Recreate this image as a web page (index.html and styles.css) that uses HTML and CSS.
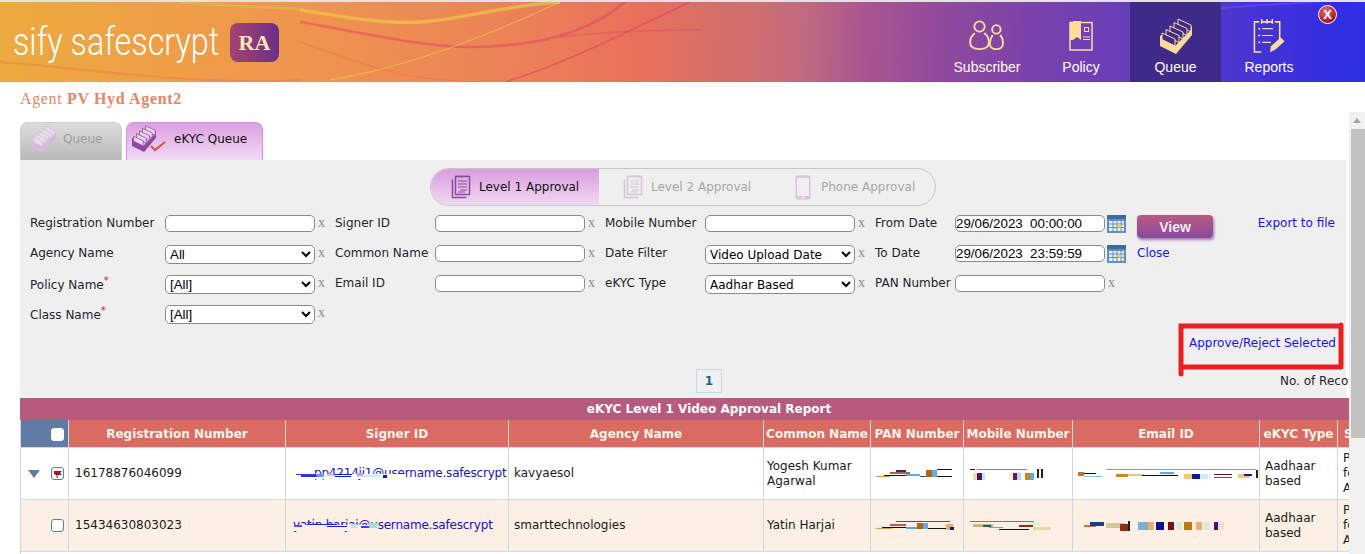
FILE: index.html
```html
<!DOCTYPE html>
<html lang="en">
<head>
    <meta charset="UTF-8">
    <title>Sify Safescrypt RA</title>
    <link rel="stylesheet" href="styles.css">
</head>
<body>
    <!-- shared icons -->
    <svg class="icon-defs" width="0" height="0">
        <symbol id="box" viewBox="0 0 32 36">
            <g fill="var(--card, #3d2a85)" stroke="currentColor" stroke-width="1">
                <path d="M18 1L31 7L31 14L18 7Z"/>
                <path d="M14 4.500L27 10.500L27 17.500L14 11Z"/>
                <path d="M10 8L23 14L23 21L10 14.500Z"/>
                <path d="M6 11.500L19 17.500L19 24.500L6 18Z"/>
                <path d="M2 15L15 21L15 28L2 21.500Z"/>
            </g>
            <path d="M31 7L32 10V17L16 36L0 28V18L2 17L2 21.500L15 28L16 27L31 12Z" fill="currentColor"/>
        </symbol>
        <symbol id="doc" viewBox="0 0 20 24">
            <path d="M4.500 1.500H18.500V19.500H4.500Z M1.500 4.500V22.500H15.500" fill="none" stroke="currentColor" stroke-width="1.500"/>
            <path d="M7 1V0 M10 1V0 M13 1V0 M16 1V0 M7 6H16 M7 9H16 M7 12H16 M9 15H16 M7 17H14" stroke="currentColor" stroke-width="1"/>
        </symbol>
    </svg>

    <header class="banner">
        <svg class="banner-waves" viewBox="0 0 1365 80" preserveAspectRatio="none" fill="none">
            <path d="M0 60 C80 66 200 84 300 78" stroke="#ef7350" stroke-width="2" opacity=".45"/>
            <path d="M180 0 C240 6 280 4 300 8" stroke="#ecd245" stroke-width="3" opacity=".3"/>
            <path d="M300 8 C340 14 380 22 420 20 C460 18 500 4 560 0" stroke="#ecd245" stroke-width="3.500" opacity=".6"/>
            <path d="M300 20 C360 30 420 45 470 45 C540 45 590 30 625 0" stroke="#e8336a" stroke-width="2.500" opacity=".45"/>
            <path d="M300 40 C330 50 360 62 385 68 C420 78 460 80 500 80" stroke="#ef6a50" stroke-width="1" opacity=".5"/>
            <path d="M330 78 C400 66 470 42 560 0" stroke="#ecd245" stroke-width="1" opacity=".65"/>
            <path d="M505 80 C570 60 630 28 690 0" stroke="#e8336a" stroke-width="1.500" opacity=".55"/>
            <path d="M560 35 C600 30 650 28 700 28" stroke="#d83a78" stroke-width="1.500" opacity=".35"/>
            <path d="M1130 20 C1220 0 1290 5 1365 -5" stroke="#6c5be8" stroke-width="2" opacity=".5"/>
        </svg>
        <div class="logo">
            <span class="logo-text"><span class="logo-word">sify safescrypt</span></span>
            <span class="logo-badge">RA</span>
        </div>
        <nav class="main-nav">
            <a class="nav-item nav-subscriber" href="#">
                <svg width="38" height="30" viewBox="0 0 38 32" fill="none" stroke="#fddb9b" stroke-width="2">
                    <circle cx="11" cy="7" r="5.500"/>
                    <path d="M6 14 C2 17 1 21 1 24 C1 29 5 31 11 31 C17 31 21 29 21 24 C21 20 19 16 16 14"/>
                    <circle cx="29" cy="10" r="4.500"/>
                    <path d="M25 16 C23 19 22 22 22 25 C22 29 25 31 29 31 C33 31 36 29 36 25 C36 21 35 18 33 16"/>
                </svg>
                <span>Subscriber</span>
            </a>
            <a class="nav-item nav-policy" href="#">
                <svg width="24" height="30" viewBox="0 0 24 30" fill="none" stroke="#fddb9b" stroke-width="1.500">
                    <rect x="1" y="1.500" width="22" height="27.500"/>
                    <path d="M1 1H4V0H12V19L8 16L4 19H1Z" fill="#fddb9b" stroke="none"/>
                    <rect x="15.500" y="6.500" width="4" height="4" stroke-width="1"/>
                    <path d="M14 16H21 M14 18.500H21" stroke-width="1"/>
                </svg>
                <span>Policy</span>
            </a>
            <a class="nav-item nav-queue" href="#">
                <svg class="queue-icon" width="32" height="36"><use href="#box"/></svg>
                <span>Queue</span>
            </a>
            <a class="nav-item nav-reports" href="#">
                <svg width="32" height="35" viewBox="0 0 32 36" fill="none" stroke="#fddb9b" stroke-width="1.600">
                    <path d="M6 4H1V35H8 M22 4H27V22 M9 4H19 M8.500 1V6 M14 1V6 M19.500 1V6"/>
                    <path d="M9 11H20 M9 18H20 M9 25H18" stroke-width="1.200"/>
                    <circle cx="6" cy="11" r="1" fill="#fddb9b" stroke="none"/>
                    <circle cx="6" cy="18" r="1" fill="#fddb9b" stroke="none"/>
                    <circle cx="6" cy="25" r="1" fill="#fddb9b" stroke="none"/>
                    <path d="M17 35L18 29L28 20L32 24L22 33Z" fill="#fddb9b" stroke="none"/>
                </svg>
                <span>Reports</span>
            </a>
        </nav>
        <a class="close-btn" href="#">X</a>
    </header>

    <div class="agent-line">Agent <b>PV Hyd Agent2</b></div>

    <div class="workspace">
        <main class="scroll-area">
            <div class="tabs">
                <a class="tab tab-off" href="#">
                    <svg class="tab-icon-off" width="25" height="28"><use href="#box"/></svg>
                    Queue
                </a>
                <a class="tab tab-on" href="#">
                    <svg class="tab-icon-on" width="24" height="27"><use href="#box"/></svg>
                    <svg class="tab-check" width="16" height="12" viewBox="0 0 16 12" fill="none" stroke="#d9534a" stroke-width="2.200"><path d="M1 6L5 10L15 2"/></svg>
                    eKYC Queue
                </a>
            </div>

            <section class="panel">
                <div class="approval-switch">
                    <a class="switch-item switch-on" href="#">
                        <svg class="doc-on" width="20" height="24"><use href="#doc"/></svg>
                        Level 1 Approval
                    </a>
                    <a class="switch-item switch-two" href="#">
                        <svg class="doc-off" width="20" height="24"><use href="#doc"/></svg>
                        Level 2 Approval
                    </a>
                    <a class="switch-item switch-three" href="#">
                        <svg width="16" height="25" viewBox="0 0 16 25"><rect x=".5" y=".5" width="15" height="24" rx="2" fill="#dcc4de"/><rect x="2" y="3" width="12" height="18" fill="#efefef"/><rect x="6" y="22" width="4" height="1" fill="#efefef"/></svg>
                        Phone Approval
                    </a>
                </div>

                <form class="filters">
                    <label>Registration Number</label>
                    <input class="field" type="text">
                    <span class="clear">x</span>
                    <label>Signer ID</label>
                    <input class="field" type="text">
                    <span class="clear">x</span>
                    <label>Mobile Number</label>
                    <input class="field" type="text">
                    <span class="clear">x</span>
                    <label>From Date</label>
                    <input class="field date" type="text" value="29/06/2023  00:00:00">
                    <svg class="cal" width="19" height="18" viewBox="0 0 19 18"><rect width="19" height="18" fill="#5f8fc4"/><rect y="0" width="19" height="4" fill="#3f6a9e"/><path d="M2 6H17V16H2Z" fill="#e8eef6"/><path d="M2 9H17 M2 12.500H17 M6 6V16 M10 6V16 M14 6V16" stroke="#5f8fc4"/><rect x="10.500" y="9.500" width="3.500" height="3" fill="#f4e11a"/></svg>
                    <button class="view-btn" type="button">View</button>
                    <a class="link export" href="#">Export to file</a>

                    <label>Agency Name</label>
                    <select class="field pick"><option>All</option></select>
                    <span class="clear">x</span>
                    <label>Common Name</label>
                    <input class="field" type="text">
                    <span class="clear">x</span>
                    <label>Date Filter</label>
                    <select class="field pick tahoma"><option>Video Upload Date</option></select>
                    <span class="clear">x</span>
                    <label>To Date</label>
                    <input class="field date" type="text" value="29/06/2023  23:59:59">
                    <svg class="cal" width="19" height="18" viewBox="0 0 19 18"><rect width="19" height="18" fill="#5f8fc4"/><rect y="0" width="19" height="4" fill="#3f6a9e"/><path d="M2 6H17V16H2Z" fill="#e8eef6"/><path d="M2 9H17 M2 12.500H17 M6 6V16 M10 6V16 M14 6V16" stroke="#5f8fc4"/><rect x="10.500" y="9.500" width="3.500" height="3" fill="#f4e11a"/></svg>
                    <a class="link close-link" href="#">Close</a>
                    <span></span>

                    <label class="low">Policy Name<sup>*</sup></label>
                    <select class="field pick"><option>[All]</option></select>
                    <span class="clear">x</span>
                    <label>Email ID</label>
                    <input class="field" type="text">
                    <span class="clear">x</span>
                    <label>eKYC Type</label>
                    <select class="field pick tahoma"><option>Aadhar Based</option></select>
                    <span class="clear">x</span>
                    <label>PAN Number</label>
                    <input class="field" type="text">
                    <span class="clear">x</span>
                    <span></span>
                    <span></span>

                    <label class="low">Class Name<sup>*</sup></label>
                    <select class="field pick"><option>[All]</option></select>
                    <span class="clear">x</span>
                </form>

                <div class="approve-row">
                    <a class="link approve" href="#">
                        Approve/Reject Selected
                        <svg class="marker" width="170" height="55" viewBox="0 0 170 55" fill="none" stroke="#e91f22" stroke-width="5" stroke-linecap="round">
                            <path d="M6 52V4H163 M166 3V45 M6 45H166"/>
                        </svg>
                    </a>
                </div>

                <div class="pager-row">
                    <a class="pager" href="#">1</a>
                    <span class="rec-count">No. of Records : 2</span>
                </div>
            </section>

            <table class="report">
                <colgroup>
                    <col class="c-check"><col class="c-reg"><col class="c-signer"><col class="c-agency"><col class="c-name">
                    <col class="c-pan"><col class="c-mobile"><col class="c-email"><col class="c-type"><col class="c-status">
                </colgroup>
                <thead>
                    <tr class="report-title"><th colspan="10"><span>eKYC Level 1 Video Approval Report</span></th></tr>
                    <tr class="report-head">
                        <th class="head-check"><input class="check head-box" type="checkbox"></th>
                        <th>Registration Number</th>
                        <th>Signer ID</th>
                        <th>Agency Name</th>
                        <th>Common Name</th>
                        <th>PAN Number</th>
                        <th>Mobile Number</th>
                        <th>Email ID</th>
                        <th>eKYC Type</th>
                        <th class="left">Status</th>
                    </tr>
                </thead>
                <tbody>
                    <tr>
                        <td class="cell-check">
                            <span class="caret"></span>
                            <span class="flag-box"><svg width="8" height="8" viewBox="0 0 8 8"><path d="M0 1H8L6 3L8 5H3L4 8H3L2 5L0 4Z" fill="#a3121f"/></svg></span>
                        </td>
                        <td class="num">16178876046099</td>
                        <td class="signer">
                            <span class="smear first">pp4214ji1@username.safescrypt
                                <svg width="115" height="10" viewBox="0 0 115 10"><rect x="19" y="5" width="92" height="5" fill="#fff"/><rect x="1" y="5" width="20" height="1" fill="#3030ff"/><rect x="6" y="6" width="20" height="2" fill="#2d2de8"/><rect x="22" y="5" width="7" height="3" fill="#58a0ff"/><rect x="32" y="5" width="8" height="2" fill="#d7b5ff"/><rect x="39" y="5" width="18" height="1" fill="#1818d8"/><rect x="40" y="7" width="16" height="1" fill="#1818d8"/><rect x="62" y="6" width="24" height="2" fill="#c9f2f5"/><rect x="62" y="4" width="6" height="3" fill="#c9a0ff"/><rect x="88" y="6" width="4" height="3" fill="#3000e0"/></svg>
                            </span>
                        </td>
                        <td>kavyaesol</td>
                        <td class="name">Yogesh Kumar Agarwal</td>
                        <td class="masked">
                            <svg width="76" height="9" viewBox="0 0 76 9"><rect x="0" y="7" width="14" height="1" fill="#d99a3a"/><rect x="8" y="6" width="22" height="1" fill="#111"/><rect x="14" y="3" width="20" height="2" fill="#c0574b"/><rect x="20" y="1" width="10" height="2" fill="#25308a"/><rect x="30" y="5" width="14" height="2" fill="#5aa9e6"/><rect x="44" y="7" width="6" height="1" fill="#0a5fa0"/><rect x="50" y="1" width="6" height="7" fill="#b5650d"/><rect x="56" y="1" width="5" height="7" fill="#6aa8dc"/><rect x="61" y="0" width="15" height="1" fill="#111"/><rect x="61" y="7" width="15" height="1" fill="#111"/></svg>
                        </td>
                        <td class="masked">
                            <svg width="76" height="12" viewBox="0 0 76 12"><rect x="1" y="1" width="5" height="1" fill="#111"/><rect x="8" y="1" width="50" height="1" fill="#888"/><rect x="4" y="5" width="8" height="7" fill="#f7d9a8"/><rect x="8" y="5" width="5" height="7" fill="#55105f"/><rect x="13" y="5" width="3" height="7" fill="#c8e6fa"/><rect x="40" y="5" width="8" height="7" fill="#fdf3c4"/><rect x="44" y="5" width="4" height="7" fill="#7c0e5a"/><rect x="48" y="5" width="4" height="7" fill="#b5dcf5"/><rect x="56" y="5" width="5" height="7" fill="#c88a1f"/><rect x="61" y="5" width="4" height="7" fill="#5aa9e6"/><rect x="68" y="1" width="2" height="9" fill="#222"/><rect x="72" y="1" width="2" height="9" fill="#222"/></svg>
                        </td>
                        <td class="masked">
                            <svg width="182" height="12" viewBox="0 0 182 12"><rect x="0" y="4" width="6" height="4" fill="#c8732a"/><rect x="6" y="5" width="12" height="1" fill="#111"/><rect x="6" y="8" width="18" height="1" fill="#8cc4ef"/><rect x="28" y="1" width="150" height="1" fill="#999"/><rect x="38" y="6" width="12" height="3" fill="#c88a1f"/><rect x="50" y="6" width="16" height="2" fill="#f2c27a"/><rect x="64" y="7" width="36" height="1" fill="#111"/><rect x="82" y="4" width="14" height="2" fill="#5aa9e6"/><rect x="106" y="6" width="8" height="5" fill="#f0c68a"/><rect x="114" y="6" width="8" height="5" fill="#18188c"/><rect x="122" y="6" width="8" height="5" fill="#c5f3f5"/><rect x="136" y="6" width="18" height="1" fill="#7a0e2a"/><rect x="136" y="9" width="18" height="1" fill="#1f6fb0"/><rect x="160" y="6" width="12" height="4" fill="#f2c27a"/><rect x="166" y="6" width="8" height="2" fill="#18188c"/><rect x="178" y="2" width="2" height="8" fill="#222"/></svg>
                        </td>
                        <td>Aadhaar based</td>
                        <td>Pending<br>for<br>Approval</td>
                    </tr>
                    <tr class="alt">
                        <td class="cell-check"><input class="check" type="checkbox"></td>
                        <td class="num">15434630803023</td>
                        <td class="signer">
                            <span class="smear shift">yatin.harjai@username.safescrypt
                                <svg width="90" height="10" viewBox="0 0 90 10"><rect x="0" y="4" width="84" height="6" fill="#fcf0e5"/><rect x="1" y="4" width="8" height="2" fill="#7a3cff"/><rect x="14" y="3" width="30" height="1" fill="#2020d0"/><rect x="34" y="5" width="20" height="1" fill="#2020d0"/><rect x="58" y="3" width="6" height="4" fill="#b8e8e0"/><rect x="68" y="5" width="8" height="2" fill="#3b3bff"/><rect x="76" y="2" width="8" height="5" fill="#a8dcdc"/></svg>
                            </span>
                        </td>
                        <td>smarttechnologies</td>
                        <td class="name">Yatin Harjai</td>
                        <td class="masked">
                            <svg width="80" height="11" viewBox="0 0 80 11"><rect x="2" y="0" width="16" height="1" fill="#fff"/><rect x="20" y="1" width="54" height="1" fill="#555"/><rect x="0" y="8" width="16" height="1" fill="#d99a3a"/><rect x="6" y="7" width="24" height="1" fill="#111"/><rect x="14" y="4" width="16" height="2" fill="#c0574b"/><rect x="30" y="7" width="16" height="2" fill="#5aa9e6"/><rect x="41" y="3" width="6" height="6" fill="#b5650d"/><rect x="47" y="3" width="5" height="6" fill="#6aa8dc"/><rect x="52" y="8" width="20" height="1" fill="#111"/><rect x="70" y="4" width="7" height="6" fill="#e8b070"/><rect x="74" y="7" width="4" height="3" fill="#18188c"/></svg>
                        </td>
                        <td class="masked">
                            <svg width="84" height="11" viewBox="0 0 84 11"><rect x="1" y="1" width="64" height="1" fill="#777"/><rect x="4" y="4" width="20" height="3" fill="#c9b48a"/><rect x="14" y="5" width="8" height="2" fill="#18588c"/><rect x="20" y="7" width="14" height="1" fill="#5aa9e6"/><rect x="30" y="9" width="30" height="1" fill="#111"/><rect x="50" y="5" width="14" height="2" fill="#8a3010"/><rect x="56" y="3" width="16" height="2" fill="#e5ecd8"/><rect x="64" y="7" width="18" height="3" fill="#f4d29c"/></svg>
                        </td>
                        <td class="masked">
                            <svg width="150" height="14" viewBox="0 0 150 14"><rect x="6" y="6" width="12" height="2" fill="#c8732a"/><rect x="12" y="3" width="14" height="4" fill="#18408c"/><rect x="28" y="4" width="20" height="5" fill="#d9c49a"/><rect x="42" y="5" width="8" height="7" fill="#8a3010"/><rect x="50" y="2" width="2" height="10" fill="#222"/><rect x="60" y="3" width="10" height="8" fill="#7faed2"/><rect x="70" y="3" width="6" height="8" fill="#e8b070"/><rect x="78" y="3" width="8" height="8" fill="#101090"/><rect x="90" y="3" width="6" height="8" fill="#7a1010"/><rect x="98" y="3" width="6" height="8" fill="#e0e8d8"/><rect x="106" y="3" width="8" height="8" fill="#c07a10"/><rect x="118" y="3" width="6" height="8" fill="#e8b070"/><rect x="126" y="3" width="6" height="8" fill="#dde8d8"/><rect x="136" y="3" width="4" height="8" fill="#4a1080"/><rect x="140" y="3" width="6" height="8" fill="#e8e8c8"/></svg>
                        </td>
                        <td>Aadhaar based</td>
                        <td>Pending<br>for<br>Approval</td>
                    </tr>
                    <tr><td colspan="10"></td></tr>
                </tbody>
            </table>
        </main>

        <aside class="scrollbar">
            <span class="scroll-up"></span>
            <span class="scroll-thumb"></span>
        </aside>
    </div>
</body>
</html>
```

FILE: styles.css
```css
html, body {
    margin: 0;
    padding: 0;
    height: 554px;
    overflow: hidden;
    background-color: #fff;
    font-family: "DejaVu Sans", sans-serif;
    font-size: 12px;
    color: #222;
}

a {
    text-decoration: none;
}

.icon-defs {
    display: block;
    height: 0;
}

/* banner */
.banner {
    position: relative;
    display: flex;
    align-items: stretch;
    height: 80px;
    border-top: 2px solid #e4e2e4;
    background: linear-gradient(92deg, #ecab3e 0%, #ef9c48 15%, #ef9350 24%, #ec8157 38%, #e8705c 47%, #cf6e6e 55%, #c06a80 59%, #ac5590 63%, #8f4a9c 69%, #7d42aa 75%, #5f3cc0 85%, #3a30dc 95%, #2d2ee4 100%);
}

.banner-waves {
    position: absolute;
    left: 0;
    top: 0;
    width: 100%;
    height: 100%;
}

.logo {
    position: relative;
    display: flex;
    align-items: center;
    padding-left: 13px;
}

.logo-text {
    width: 208px;
    font-family: "Roboto", sans-serif;
    font-weight: 300;
    font-size: 38px;
    line-height: 44px;
    color: #fff;
    white-space: nowrap;
}

/* the logo lettering is narrower than any installed light face */
.logo-word {
    display: inline-block;
    transform: scaleX(.85);
    transform-origin: left center;
}

.logo-badge {
    display: block;
    width: 49px;
    height: 39px;
    margin: 0 0 0 9px;
    border-radius: 8px;
    background: linear-gradient(90deg, #a5436f, #6a2f8b);
    color: #fbe6b6;
    font-family: "Liberation Serif", serif;
    font-weight: bold;
    font-size: 22px;
    line-height: 39px;
    text-align: center;
}

.main-nav {
    position: relative;
    display: flex;
    margin-left: auto;
    padding-right: 48px;
}

.nav-item {
    display: flex;
    flex-direction: column;
    align-items: center;
    justify-content: flex-end;
    padding-bottom: 7px;
    font-family: "Liberation Sans", sans-serif;
    font-size: 14px;
    color: #fff;
    box-sizing: border-box;
}

.nav-subscriber {
    width: 90px;
}

.nav-subscriber svg {
    margin-bottom: 9px;
}

.nav-policy {
    width: 98px;
}

.nav-policy svg {
    margin-bottom: 8px;
}

.nav-queue {
    width: 91px;
    background-color: #3f2a8a;
}

.queue-icon {
    margin-bottom: 5px;
    color: #fddb9b;
    --card: #3f2a8a;
}

.nav-reports {
    width: 96px;
}

.nav-reports svg {
    margin-bottom: 6px;
}

.close-btn {
    position: absolute;
    right: 28px;
    top: 3px;
    width: 17px;
    height: 17px;
    border: 1px solid #fff;
    border-radius: 50%;
    background: radial-gradient(circle at 40% 30%, #e8707a, #a8161f 70%);
    color: #fff;
    font: bold 13px/17px "Liberation Sans", sans-serif;
    text-align: center;
}

.agent-line {
    height: 30px;
    padding-left: 20px;
    font-family: "Liberation Serif", serif;
    font-size: 16px;
    line-height: 33px;
    letter-spacing: .65px;
    color: #ee8266;
}

/* scrolling part */
.workspace {
    display: flex;
    height: 442px;
}

.scroll-area {
    flex: none;
    width: 1329px;
    padding: 10px 0 0 20px;
    overflow: hidden;
}

.scrollbar {
    flex: none;
    width: 16px;
    background-color: #f1f1f1;
}

.scroll-up {
    display: block;
    width: 0;
    margin: 6px auto 0;
    border: 4px solid transparent;
    border-top: 0;
    border-bottom: 5px solid #a3a3a3;
    border-left-width: 4px;
}

.scroll-thumb {
    display: block;
    width: 14px;
    height: 309px;
    margin: 6px 0 0 2px;
    background-color: #c1c1c1;
}

/* tabs */
.tabs {
    display: flex;
    gap: 4px;
    height: 38px;
}

.tab {
    display: flex;
    align-items: center;
    position: relative;
    box-sizing: border-box;
    border: 1px solid;
    border-bottom: 0;
    border-radius: 8px 8px 0 0;
    font-size: 12px;
    padding-bottom: 6px;
}

.tab svg {
    flex: none;
}

.tab-off {
    width: 102px;
    padding-left: 10px;
    gap: 7px;
    border-color: #cdcdcd;
    background: linear-gradient(#dcdcdc, #b9b9b9);
    color: #9c9c9c;
}

.tab-icon-off {
    color: #d4bcd8;
    --card: #e8dcea;
}

.tab-on {
    width: 137px;
    padding-left: 5px;
    gap: 18px;
    border: 1px solid #d390e2;
    border-bottom: 0;
    background: linear-gradient(#dc9fe0, #f1dcf4);
    color: #111;
}

.tab-icon-on {
    color: #8f4aa0;
    --card: #e8d4ee;
}

.tab-check {
    position: absolute;
    left: 23px;
    top: 17px;
}

/* filter panel */
.panel {
    width: 1326px;
    height: 238px;
    padding-top: 8px;
    box-sizing: border-box;
    background-color: #efefef;
}

.approval-switch {
    display: flex;
    width: 506px;
    height: 38px;
    margin-left: 410px;
    box-sizing: border-box;
    border: 1px solid #c6c6c6;
    border-radius: 19px;
    overflow: hidden;
}

.switch-item {
    display: flex;
    align-items: center;
    color: #a6a6a6;
}

.switch-on {
    width: 168px;
    padding-left: 20px;
    gap: 8px;
    box-sizing: border-box;
    background: linear-gradient(#da9cde, #f0d9f3);
    color: #111;
}

.switch-two {
    width: 172px;
    padding-left: 24px;
    gap: 8px;
    box-sizing: border-box;
}

.switch-three {
    padding-left: 24px;
    gap: 10px;
}

.doc-on {
    color: #8a4a9c;
}

.doc-off {
    color: #d7c3da;
}

.filters {
    display: grid;
    grid-template-columns: 135px 150px 20px 100px 150px 20px 100px 150px 20px 80px 150px 32px 76px 123px;
    grid-auto-rows: 30px;
    align-items: start;
    margin: 9px 0 0 10px;
    width: 1306px;
}

.filters label {
    margin-top: 1px;
    line-height: 15px;
    color: #1f2430;
}

.filters label.low {
    margin-top: 3px;
}

.filters sup {
    color: #e8112d;
    font-size: 10px;
    line-height: 0;
}

.field {
    width: 150px;
    height: 17px;
    padding: 0 2px;
    box-sizing: border-box;
    border: 1px solid #8a8a8a;
    border-radius: 5px;
    background-color: #fff;
    font-family: "Liberation Sans", sans-serif;
    font-size: 13.333px;
    color: #000;
    outline: none;
}

.date {
    padding: 0;
    white-space: pre;
}

.pick {
    height: 19px;
    padding: 0;
    margin-top: 0;
}

.tahoma {
    font-family: "DejaVu Sans", sans-serif;
    font-size: 12px;
}

.clear {
    padding-left: 3px;
    font-family: "Liberation Serif", serif;
    font-size: 14px;
    line-height: 15px;
    color: #8c8c8c;
}

.cal {
    margin-left: 2px;
}

.view-btn {
    width: 76px;
    height: 23px;
    padding: 0;
    border: none;
    border-radius: 4px;
    background: linear-gradient(#b75a80, #8a4a9e);
    box-shadow: 1px 2px 3px rgba(120, 70, 150, .7);
    font-family: "Liberation Sans", sans-serif;
    font-size: 14px;
    font-weight: bold;
    color: #f5e9ee;
}

.link {
    color: #1414f0;
}

.export {
    justify-self: end;
    margin: 1px 1px 0 0;
    line-height: 15px;
}

.close-link {
    margin-top: 1px;
    line-height: 15px;
}

.approve-row {
    display: flex;
    justify-content: flex-end;
    height: 15px;
    margin: 0 10px 0 0;
    position: relative;
    top: 1px;
}

.approve {
    position: relative;
    line-height: 15px;
}

.marker {
    position: absolute;
    right: -9px;
    top: -14px;
}

.pager-row {
    display: flex;
    align-items: center;
    height: 24px;
    margin-top: 19px;
    padding-left: 676px;
}

.pager {
    width: 24px;
    height: 22px;
    border: 1px solid #cdd6e3;
    background-color: #eff0f2;
    font: bold 12px/22px "DejaVu Sans", sans-serif;
    text-align: center;
    color: #2f5a8f;
}

.rec-count {
    width: 69px;
    margin-left: auto;
    margin-right: -3px;
    overflow: hidden;
    white-space: nowrap;
    color: #1f2430;
}

/* report table */
.report {
    table-layout: fixed;
    width: 1418px;
    margin-top: 0;
    border-collapse: collapse;
    font-size: 12px;
}

.c-check { width: 48px; }
.c-reg { width: 217px; }
.c-signer { width: 223px; }
.c-agency { width: 255px; }
.c-name { width: 107px; }
.c-pan { width: 93px; }
.c-mobile { width: 109px; }
.c-email { width: 187px; }
.c-type { width: 78px; }
.c-status { width: 100px; }

.report th, .report td {
    border: 1px solid #cfd6e4;
    padding: 0;
}

.report-title th {
    height: 20px;
    background-color: #b75b7e;
    color: #fff;
    font-size: 12px;
    text-align: left;
    border-color: #b75b7e;
}

.report-title span {
    display: block;
    width: 1376px;
    text-align: center;
}

.report-head th {
    height: 27px;
    background-color: #da6b63;
    color: #fdf3ea;
    font-size: 12px;
    white-space: nowrap;
    overflow: hidden;
}

.report-head th.left {
    text-align: left;
    padding-left: 6px;
}

.report-head th.head-check {
    background-color: #607ca5;
    text-align: right;
    padding-right: 4px;
}

.check {
    display: inline-block;
    appearance: none;
    width: 13px;
    height: 13px;
    margin: 0 0 0 0;
    box-sizing: border-box;
    border: 1px solid #607ca5;
    border-radius: 3px;
    background-color: #fff;
    vertical-align: middle;
}

.head-box {
    border-color: #fff;
}

.report td {
    height: 51px;
    padding: 0 5px;
    line-height: 15px;
    color: #1a1a1a;
    white-space: normal;
}

.report td.cell-check {
    padding: 0 4px 0 0;
    text-align: right;
}

.report td.num {
    padding-left: 6px;
}

.report td.name {
    padding-left: 3px;
}

.caret {
    display: inline-block;
    width: 0;
    margin-right: 7px;
    border-left: 6.500px solid transparent;
    border-right: 6.500px solid transparent;
    border-top: 8px solid #607ca5;
    vertical-align: middle;
}

.flag-box {
    display: inline-flex;
    align-items: center;
    justify-content: center;
    width: 13px;
    height: 13px;
    box-sizing: border-box;
    border: 1px solid #607ca5;
    border-radius: 3px;
    background-color: #fff;
    vertical-align: middle;
}

.report td.signer {
    padding: 0 0 0 9px;
    color: #1414c8;
    letter-spacing: -.2px;
    white-space: nowrap;
    overflow: hidden;
}

.smear {
    position: relative;
    display: inline-block;
}

.smear.first {
    margin-left: 19px;
}

.smear.first svg {
    left: -19px;
}

.smear.shift {
    margin-left: -2px;
}

.smear svg {
    position: absolute;
    left: 0;
    top: 3px;
}

.report td.masked {
    padding: 0 0 0 5px;
    overflow: hidden;
}

.report td.masked svg {
    display: block;
}

.alt td {
    background-color: #fcf0e5;
}
```
